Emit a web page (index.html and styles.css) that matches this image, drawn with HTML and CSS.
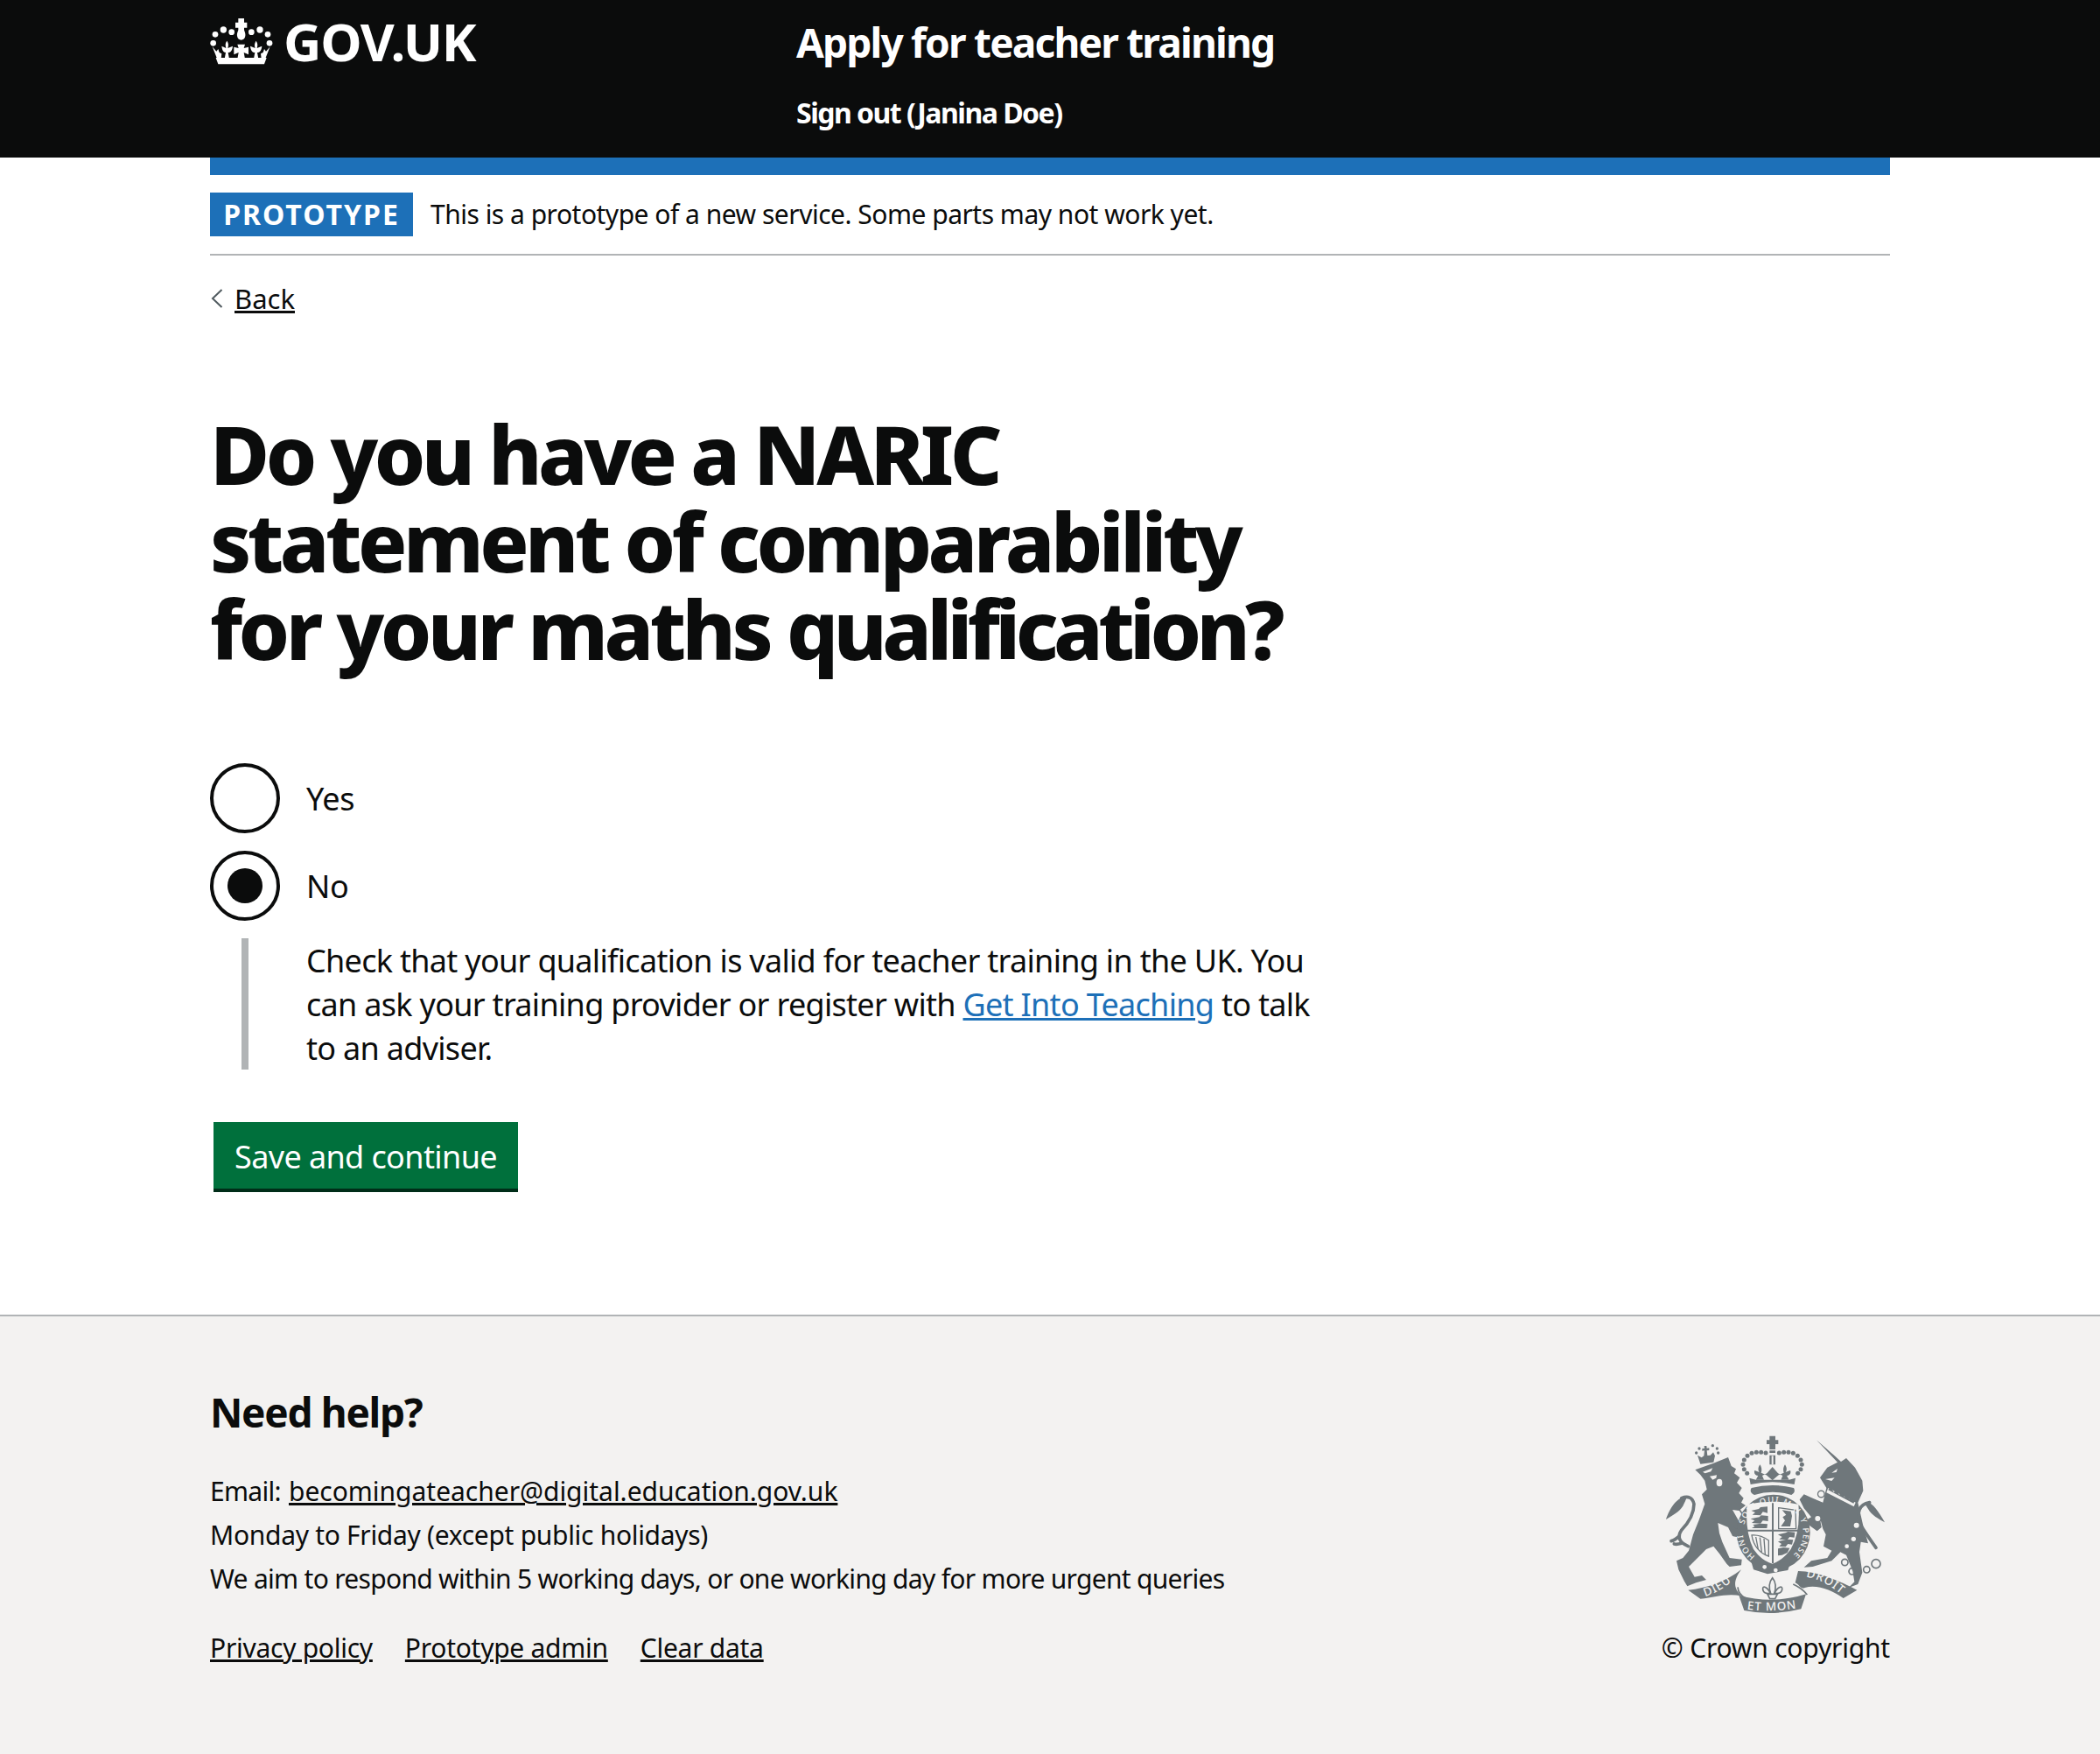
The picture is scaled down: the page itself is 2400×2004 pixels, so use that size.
FILE: index.html
```html
<!DOCTYPE html>
<html lang="en">
<head>
<meta charset="utf-8">
<title>Apply for teacher training</title>
<link rel="stylesheet" href="styles.css">
</head>
<body>
<header class="header">
  <div class="container header-inner">
    <a class="logo" href="#">
      <svg class="crown" viewBox="30 33 216 159" aria-hidden="true">
        <g fill="#fff">
          <path d="M127 33h20v14h10v18h-10v8c3 8 5 14 4 20-1 9-7 14-14 14s-13-5-14-14c-1-6 1-12 4-20v-8h-10V47h10z"/>
          <circle cx="76" cy="72" r="11"/><circle cx="104" cy="80" r="10"/>
          <circle cx="172" cy="80" r="10"/><circle cx="201" cy="72" r="11"/>
          <circle cx="48" cy="88" r="10"/><circle cx="228" cy="88" r="10"/>
          <circle cx="41" cy="118" r="10"/><circle cx="234" cy="118" r="10"/>
          <path d="M50 168H224L216 190H58z"/>
          <path d="M38 130L52 146l6-8 4 12 8 4-2 16H54z"/>
          <path d="M236 130L222 146l-6-8-4 12-8 4 2 16h14z"/>
          <path d="M88 110C80 122 84 130 85 135L70 128C72 145 78 150 84 150L80 172H96L92 150C100 150 106 145 108 128L91 135C92 130 96 122 88 110z"/>
          <path d="M188 110C180 122 184 130 185 135L168 128C170 145 176 150 184 150L180 172H196L192 150C200 150 206 145 208 128L191 135C192 130 196 122 188 110z"/>
          <path d="M124 122H150L146 135L162 131V157L146 150L150 172H124L128 150L112 157V131L128 135z"/>
        </g>
      </svg>
      <span class="logo-text">GOV.UK</span>
    </a>
    <div class="service">
      <a class="service-name" href="#">Apply for teacher training</a>
      <a class="sign-out" href="#">Sign out (Janina Doe)</a>
    </div>
  </div>
</header>

<div class="container">
  <div class="phase">
    <strong class="tag">PROTOTYPE</strong>
    <span class="phase-text">This is a prototype of a new service. Some parts may not work yet.</span>
  </div>
  <a class="back" href="#">
    <svg class="back-arrow" viewBox="0 0 16 22" aria-hidden="true"><path d="M13.500 1L3 11l10.500 10"/></svg>
    <span class="back-text">Back</span>
  </a>
  <main class="main">
    <h1 class="title">Do you have a NARIC statement of comparability for your maths <span class="title-tight">qualification</span>?</h1>
    <div class="radios">
      <div class="radio"><span class="radio-mark"></span><span class="radio-label">Yes</span></div>
      <div class="radio"><span class="radio-mark radio-mark-on"></span><span class="radio-label">No</span></div>
      <div class="conditional">Check that your qualification is valid for teacher training in the UK. You can ask your training provider or register with <a class="link-blue" href="#">Get Into Teaching</a> to talk to an adviser.</div>
    </div>
    <button class="button" type="button">Save and continue</button>
  </main>
</div>

<footer class="footer">
  <div class="container footer-inner">
    <div class="footer-left">
      <h2 class="help">Need help?</h2>
      <p class="help-text">Email: <a class="help-email" href="#">becomingateacher@digital.education.gov.uk</a><br><span class="help-hours">Monday to Friday (except public holidays)</span><br>We aim to respond within 5 working days, or one working day for more urgent queries</p>
      <ul class="footer-links">
        <li><a href="#">Privacy policy</a></li>
        <li><a href="#">Prototype admin</a></li>
        <li><a href="#">Clear data</a></li>
      </ul>
    </div>
    <div class="footer-right">
      <svg class="arms" viewBox="60 60 780 612" aria-hidden="true">
        <defs>
          <path id="g-top" d="M340 366A103 103 0 1 1 512 466"/>
          <path id="g-left" d="M378 474A103 103 0 0 1 335 385"/>
          <path id="s-l" d="M206 612C245 600 282 578 318 542"/>
          <path id="s-r" d="M552 545C600 553 640 575 690 620"/>
          <path id="s-c" d="M350 656Q437 668 534 650"/>
        </defs>
        <g class="arms-fill">
          <!-- lion's crown -->
          <path d="M190 158L180 128l14 8 8-6 2-18-8 1v-8l8-1-1-8h8l1 8 8-1v8l-8 1 2 17 10-1 10-10 6 12-5 22z"/>
          <circle cx="176" cy="120" r="5"/><circle cx="186" cy="105" r="5"/><circle cx="232" cy="95" r="5"/><circle cx="247" cy="105" r="5"/><circle cx="251" cy="120" r="5"/>
          <!-- lion -->
          <path d="M172 178L235 155 285 135 296 165 312 175 306 190 325 205 315 222 332 240 322 258 338 275 330 290 345 300 322 318 300 315 345 395 343 412 300 405 285 375 250 360 255 395 265 425 290 480 332 485 330 505 290 510 280 500 255 465 235 440 210 450 165 495 150 510 170 545 195 540 210 555 175 565 145 577 135 560 115 520 108 490 130 480 150 455 165 400 185 350 205 295 195 262 212 245 205 215 190 195z"/>
          <!-- lion's tail tuft -->
          <path d="M145 268C110 270 85 310 72 348C95 332 118 322 130 302C135 292 140 282 145 268z"/>
          <!-- unicorn -->
          <path d="M588 76L650 130 672 150 690 138 720 170 745 215 748 250 730 290 748 370 765 430 740 425 735 460 745 530 730 570 698 582 718 562 712 525 690 470 670 460 640 490 575 510 545 512 570 490 625 480 640 455 612 440 620 400 610 380 598 335 605 375 590 388 545 355 570 340 545 310 530 280 545 262 575 275 610 290 622 240 600 205 625 170 660 152z"/>
          <!-- unicorn's tail tuft -->
          <path d="M752 292C775 280 800 320 822 358C800 345 778 335 765 312z"/>
          <!-- royal crown -->
          <path d="M427 62h20v14h10v14h-10v18h-20V90h-10V76h10z"/>
          <path d="M427 112h20v8h-20zM427 128h20v32h-20z"/>
          <path d="M394 160C386 172 388 180 392 186L376 180C372 190 378 198 388 198L380 212H408L402 198L418 190L437 168 456 190 472 198 466 212H494L486 198C496 198 502 190 498 180L482 186C486 180 488 172 480 160C472 172 474 182 476 188L458 196 437 214 416 196 398 188C400 182 402 172 394 160z"/>
          <path d="M358 206L380 212H494L516 206 512 228Q437 212 362 228z"/>
          <path d="M365 240Q437 222 510 240Q518 255 502 264Q437 244 375 264Q356 255 365 240z"/>
          <circle cx="414" cy="120" r="7.500"/><circle cx="398" cy="118" r="7.500"/><circle cx="382" cy="118" r="7.500"/><circle cx="366" cy="121" r="7.500"/><circle cx="351" cy="130" r="7.500"/><circle cx="340" cy="144" r="7.500"/><circle cx="336" cy="160" r="7.500"/><circle cx="340" cy="176" r="7.500"/><circle cx="350" cy="190" r="7.500"/>
          <circle cx="460" cy="120" r="7.500"/><circle cx="476" cy="118" r="7.500"/><circle cx="492" cy="118" r="7.500"/><circle cx="508" cy="121" r="7.500"/><circle cx="523" cy="130" r="7.500"/><circle cx="534" cy="144" r="7.500"/><circle cx="538" cy="160" r="7.500"/><circle cx="534" cy="176" r="7.500"/><circle cx="524" cy="190" r="7.500"/>
          <!-- garter -->
          <ellipse cx="440" cy="393" rx="126" ry="130"/>
          <path d="M360 478L388 470 445 500 500 490 490 522 420 535 372 520z"/>
          <!-- lion's paw over the garter -->
          <path d="M300 372L345 395 343 412 300 405z"/>
          <!-- ribbon -->
          <path d="M148 590C210 585 280 560 330 520C300 560 305 585 330 610C280 600 240 615 190 620z"/>
          <path d="M322 608Q437 640 552 604L535 655Q437 680 340 660z"/>
          <path d="M525 525C590 525 670 560 727 590L680 618C640 590 590 570 548 582C535 590 528 570 515 565z"/>
        </g>
        <g class="arms-stroke">
          <path class="arms-tail" d="M148 440Q102 420 125 385Q168 340 168 295Q160 262 125 275"/>
          <path class="arms-tail" d="M118 405Q100 420 90 422M125 430Q108 435 100 432"/>
          <path class="arms-tail" d="M740 370Q715 300 770 290M738 365Q760 400 792 445"/>
          <path d="M318 580Q320 605 345 618M508 570Q540 585 556 606"/>
          <path d="M322 312L345 345"/>
          <circle cx="604" cy="261" r="11"/><circle cx="592" cy="345" r="11"/><circle cx="725" cy="368" r="11"/>
          <circle cx="685" cy="495" r="11"/><circle cx="710" cy="526" r="11"/><circle cx="760" cy="520" r="11"/><circle cx="792" cy="500" r="15"/>
        </g>
        <g class="arms-light">
          <!-- lion's face -->
          <path d="M198 185L232 172 226 184 206 190z"/>
          <ellipse cx="255" cy="222" rx="10" ry="13"/>
          <path d="M222 200L246 196 244 206 232 212z"/>
          <!-- unicorn's face, spots -->
          <path d="M640 188L660 174 656 186z"/>
          <path d="M618 210L650 205 640 216z"/>
          <circle cx="715" cy="415" r="8"/><circle cx="692" cy="440" r="7"/>
          <circle cx="604" cy="261" r="9"/><circle cx="592" cy="345" r="9"/><circle cx="725" cy="368" r="9"/>
          <circle cx="410" cy="511" r="7"/><circle cx="448" cy="522" r="7"/>
          <!-- unicorn collar -->
          <path d="M628 240L722 290 716 304 622 256z"/>
          <!-- crown stem split -->
          <path d="M434 130h6v30h-6z"/>
          <!-- shield -->
          <path d="M350 296Q440 278 526 296Q534 390 500 450Q470 490 437 500Q400 490 372 450Q342 390 350 296z"/>
        </g>
        <g class="arms-fill">
          <path d="M628 247L715 293 718 286 708 272 700 280 692 262 684 272 674 254 666 264 654 244 648 256 634 236z"/>
          <!-- quartered lions -->
          <path d="M364 318L390 312 396 306 420 304 420 326 404 322 396 334 368 332 378 324z"/>
          <path d="M362 346L392 340 398 334 422 336 422 354 404 352 396 362 366 360 376 352z"/>
          <path d="M370 366L396 362 420 364 418 378 366 378 376 372z"/>
          <path d="M456 400L482 394 490 390 514 392 512 410 496 408 488 418 460 416 470 408z"/>
          <path d="M456 424L480 418 488 416 508 418 504 434 490 432 482 442 460 440 468 432z"/>
          <path d="M456 448L474 444 496 446 488 462 470 470 456 472z"/>
          <!-- Scottish lion -->
          <path d="M470 316L500 320 504 336 498 372H466L480 352 472 340 484 332z"/>
        </g>
        <g class="arms-lines">
          <path d="M458 308L516 316 518 380H458z"/>
          <!-- harp -->
          <path d="M366 402C372 440 395 465 424 474V420C410 410 390 400 366 402z"/>
          <path d="M380 408L388 450M394 410L400 460M408 414L412 468"/>
        </g>
        <path class="arms-cross" d="M438 292V498M350 386H526"/>
        <!-- fleur -->
        <g class="arms-fleur">
          <path d="M437 548C422 566 426 590 432 606H442C448 590 452 566 437 548z"/>
          <path d="M430 600C420 580 402 572 404 588C405 600 418 604 430 600z"/>
          <path d="M444 600C454 580 472 572 470 588C469 600 456 604 444 600z"/>
          <path d="M420 604H454L446 620H428z"/>
        </g>
        <g class="arms-text">
          <text class="arms-garter"><textPath href="#g-top">SOIT QUI MAL Y PENSE</textPath></text>
          <text class="arms-garter"><textPath href="#g-left">HONI</textPath></text>
          <text><textPath href="#s-l">DIEU</textPath></text>
          <text><textPath href="#s-r">DROIT</textPath></text>
          <text><textPath href="#s-c">ET MON</textPath></text>
        </g>
      </svg>
      <span class="copyright">© Crown copyright</span>
    </div>
  </div>
</footer>
</body>
</html>
```

FILE: styles.css
```css
* { box-sizing: border-box; }
html, body { margin: 0; padding: 0; }
body {
  background: #fff;
  color: #0b0c0c;
  font-family: "Noto Sans", "Liberation Sans", sans-serif;
  font-size: 30px;
  line-height: 50px;
}
a { color: inherit; }
.container { width: 1920px; margin: 0 auto; }

.header { background: #0b0c0c; height: 180px; color: #fff; }
.header-inner { display: flex; align-items: flex-start; }
.logo { display: flex; width: 670px; padding-top: 17px; align-items: flex-start; text-decoration: none; color: #fff; }
.crown { width: 72px; height: 53px; margin: 4px 12px 0 0; flex: none; }
.logo-text { font-size: 60px; line-height: 60px; font-weight: 700; letter-spacing: -1.3px; }
.service { display: flex; flex-direction: column; padding-top: 18px; }
.service-name { font-size: 46px; line-height: 60px; font-weight: 700; text-decoration: none; letter-spacing: -1.8px; }
.sign-out { font-size: 32px; line-height: 40px; font-weight: 700; text-decoration: none; margin-top: 31px; letter-spacing: -1.5px; }

.phase { border-top: 20px solid #1d70b8; border-bottom: 2px solid #b1b4b6; padding: 20px 0; height: 112px; display: flex; align-items: center; }
.tag { background: #1d70b8; color: #fff; height: 50px; width: 232px; display: flex; align-items: center; justify-content: center; font-size: 32px; letter-spacing: 2px; line-height: 50px; font-weight: 700; margin-right: 20px; }
.phase-text { font-size: 30px; letter-spacing: -.5px; }

.back { display: flex; width: max-content; align-items: center; margin-top: 24px; font-size: 31px; line-height: 50px; gap: 12px; }
.back-arrow { width: 16px; height: 22px; fill: none; stroke: #505a5f; stroke-width: 2; flex: none; }

.main { padding-top: 102px; }
.title { margin: 0 0 104px; width: 1280px; font-size: 93px; line-height: 100px; font-weight: 800; letter-spacing: -4.5px; }
.title-tight { letter-spacing: -5.6px; }
.radios { width: 1280px; }
.radio { display: flex; align-items: center; height: 80px; margin-bottom: 20px; font-size: 36px; gap: 30px; letter-spacing: -.3px; }
.radio-label { padding-top: 2px; }
.radio-mark { width: 80px; height: 80px; border: 4px solid #0b0c0c; border-radius: 50%; flex: none; position: relative; }
.radio-mark-on::after { content: ""; position: absolute; left: 16px; top: 16px; width: 40px; height: 40px; border-radius: 50%; background: #0b0c0c; }
.conditional { margin-left: 36px; border-left: 8px solid #b1b4b6; padding: 1px 0 0 66px; height: 150px; font-size: 36px; line-height: 50px; width: 1244px; letter-spacing: -.7px; }
.link-blue { color: #1d70b8; }
.button { display: block; margin: 60px 0 0 4px; width: 348px; height: 80px; background: #00703c; border: 0; border-bottom: 4px solid #002d18; color: #fff; font: inherit; font-size: 36px; letter-spacing: -.6px; padding: 3px 0 0; }

.footer { margin-top: 140px; background: #f3f2f1; border-top: 2px solid #b1b4b6; height: 502px; }
.footer-inner { display: flex; justify-content: space-between; }
.footer-left { padding-top: 79px; }
.help { margin: 0 0 36px; font-size: 46px; line-height: 60px; font-weight: 700; letter-spacing: -1.3px; }
.help-text { margin: 0 0 29px; font-size: 30px; line-height: 50px; letter-spacing: -.7px; }
.help-email { letter-spacing: -.02px; margin-left: 2px; }
.help-hours { letter-spacing: -.3px; }
.footer-links { list-style: none; margin: 0; padding: 0; display: flex; gap: 37px; font-size: 30px; line-height: 50px; letter-spacing: -.27px; }
.footer-right { display: flex; flex-direction: column; align-items: flex-end; padding-top: 136px; }
.arms { width: 260px; height: 204px; margin-bottom: 14px; display: block; }
.arms-fill { fill: #6f777b; }
.arms-light { fill: #f3f2f1; }
.arms-stroke { fill: none; stroke: #6f777b; stroke-width: 5; }
.arms-tail { stroke-width: 11; stroke-linecap: round; }
.arms-lines { fill: none; stroke: #6f777b; stroke-width: 4; }
.arms-cross { fill: none; stroke: #6f777b; stroke-width: 6; }
.arms-fleur { fill: #f3f2f1; stroke: #6f777b; stroke-width: 5; }
.arms-text { font-family: "Noto Sans", sans-serif; font-weight: 500; font-size: 40px; fill: #f3f2f1; letter-spacing: 3px; }
.arms-garter { font-size: 28px; letter-spacing: 4px; }
.copyright { font-size: 30px; line-height: 50px; letter-spacing: -.2px; }
```
